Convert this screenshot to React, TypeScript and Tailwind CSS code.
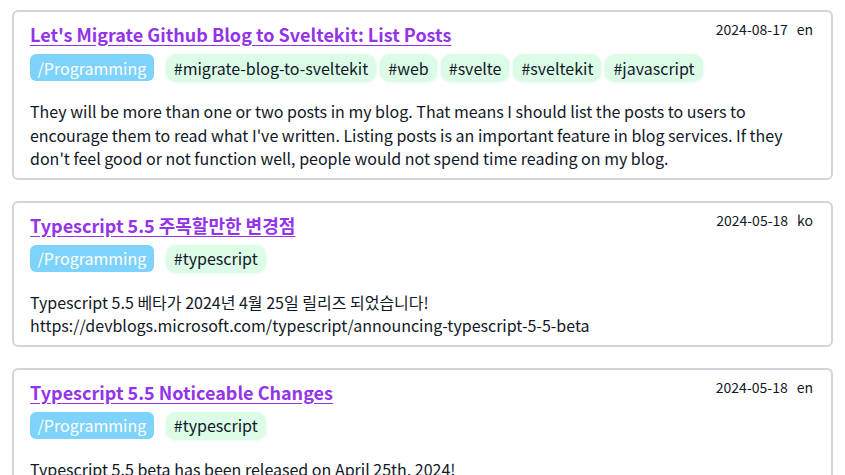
const posts = [
  {
    title: "Let's Migrate Github Blog to Sveltekit: List Posts",
    date: "2024-08-17",
    lang: "en",
    category: "/Programming",
    tags: ["migrate-blog-to-sveltekit", "web", "svelte", "sveltekit", "javascript"],
    body: "They will be more than one or two posts in my blog. That means I should list the posts to users to encourage them to read what I've written. Listing posts is an important feature in blog services. If they don't feel good or not function well, people would not spend time reading on my blog.",
  },
  {
    title: "Typescript 5.5 주목할만한 변경점",
    date: "2024-05-18",
    lang: "ko",
    category: "/Programming",
    tags: ["typescript"],
    body: "Typescript 5.5 베타가 2024년 4월 25일 릴리즈 되었습니다! https://devblogs.microsoft.com/typescript/announcing-typescript-5-5-beta",
  },
  {
    title: "Typescript 5.5 Noticeable Changes",
    date: "2024-05-18",
    lang: "en",
    category: "/Programming",
    tags: ["typescript"],
    body: "Typescript 5.5 beta has been released on April 25th, 2024! https://devblogs.microsoft.com/typescript/announcing-typescript-5-5-beta",
  },
];

export default function App() {
  return (
    <div
      className="min-h-screen bg-white px-3 pt-[10px] text-[#111827]"
      style={{ fontFamily: '"Noto Sans CJK KR", "Noto Sans", sans-serif' }}
    >
      <ul className="flex flex-col gap-[21px]">
        {posts.map((post) => (
          <li
            key={post.title}
            className="rounded-md border-2 border-[#d1d5db] bg-white pl-4 pr-[15px] pt-2 pb-[7px]"
          >
            <div className="flex items-start justify-between">
              <div className="min-w-0">
                <a
                  href="#"
                  className="text-[18px] font-semibold leading-7 text-[#9333ea] underline underline-offset-[3px]"
                >
                  {post.title}
                </a>
                <div className="mt-[6px] flex items-center whitespace-nowrap">
                  <span className="mr-3 shrink-0 rounded-md bg-[#7dd3fc] px-[7.5px] py-[1.5px] text-[16px] leading-6 text-white">
                    {post.category}
                  </span>
                  <div className="flex shrink-0 gap-1">
                    {post.tags.map((tag) => (
                      <span
                        key={tag}
                        className="shrink-0 rounded-[10px] bg-[#dcfce7] px-2 py-[1.5px] text-[16px] leading-6 shadow-[0_1px_3px_rgba(187,247,208,0.8)]"
                      >
                        #{tag}
                      </span>
                    ))}
                  </div>
                </div>
              </div>
              <div className="-mt-px flex shrink-0 gap-[9px] whitespace-nowrap pr-[3px] text-[14px] leading-5">
                <span>{post.date}</span>
                <span>{post.lang}</span>
              </div>
            </div>
            <p className="mt-[19px] text-[16px] leading-[23.5px]">{post.body}</p>
          </li>
        ))}
      </ul>
    </div>
  );
}
